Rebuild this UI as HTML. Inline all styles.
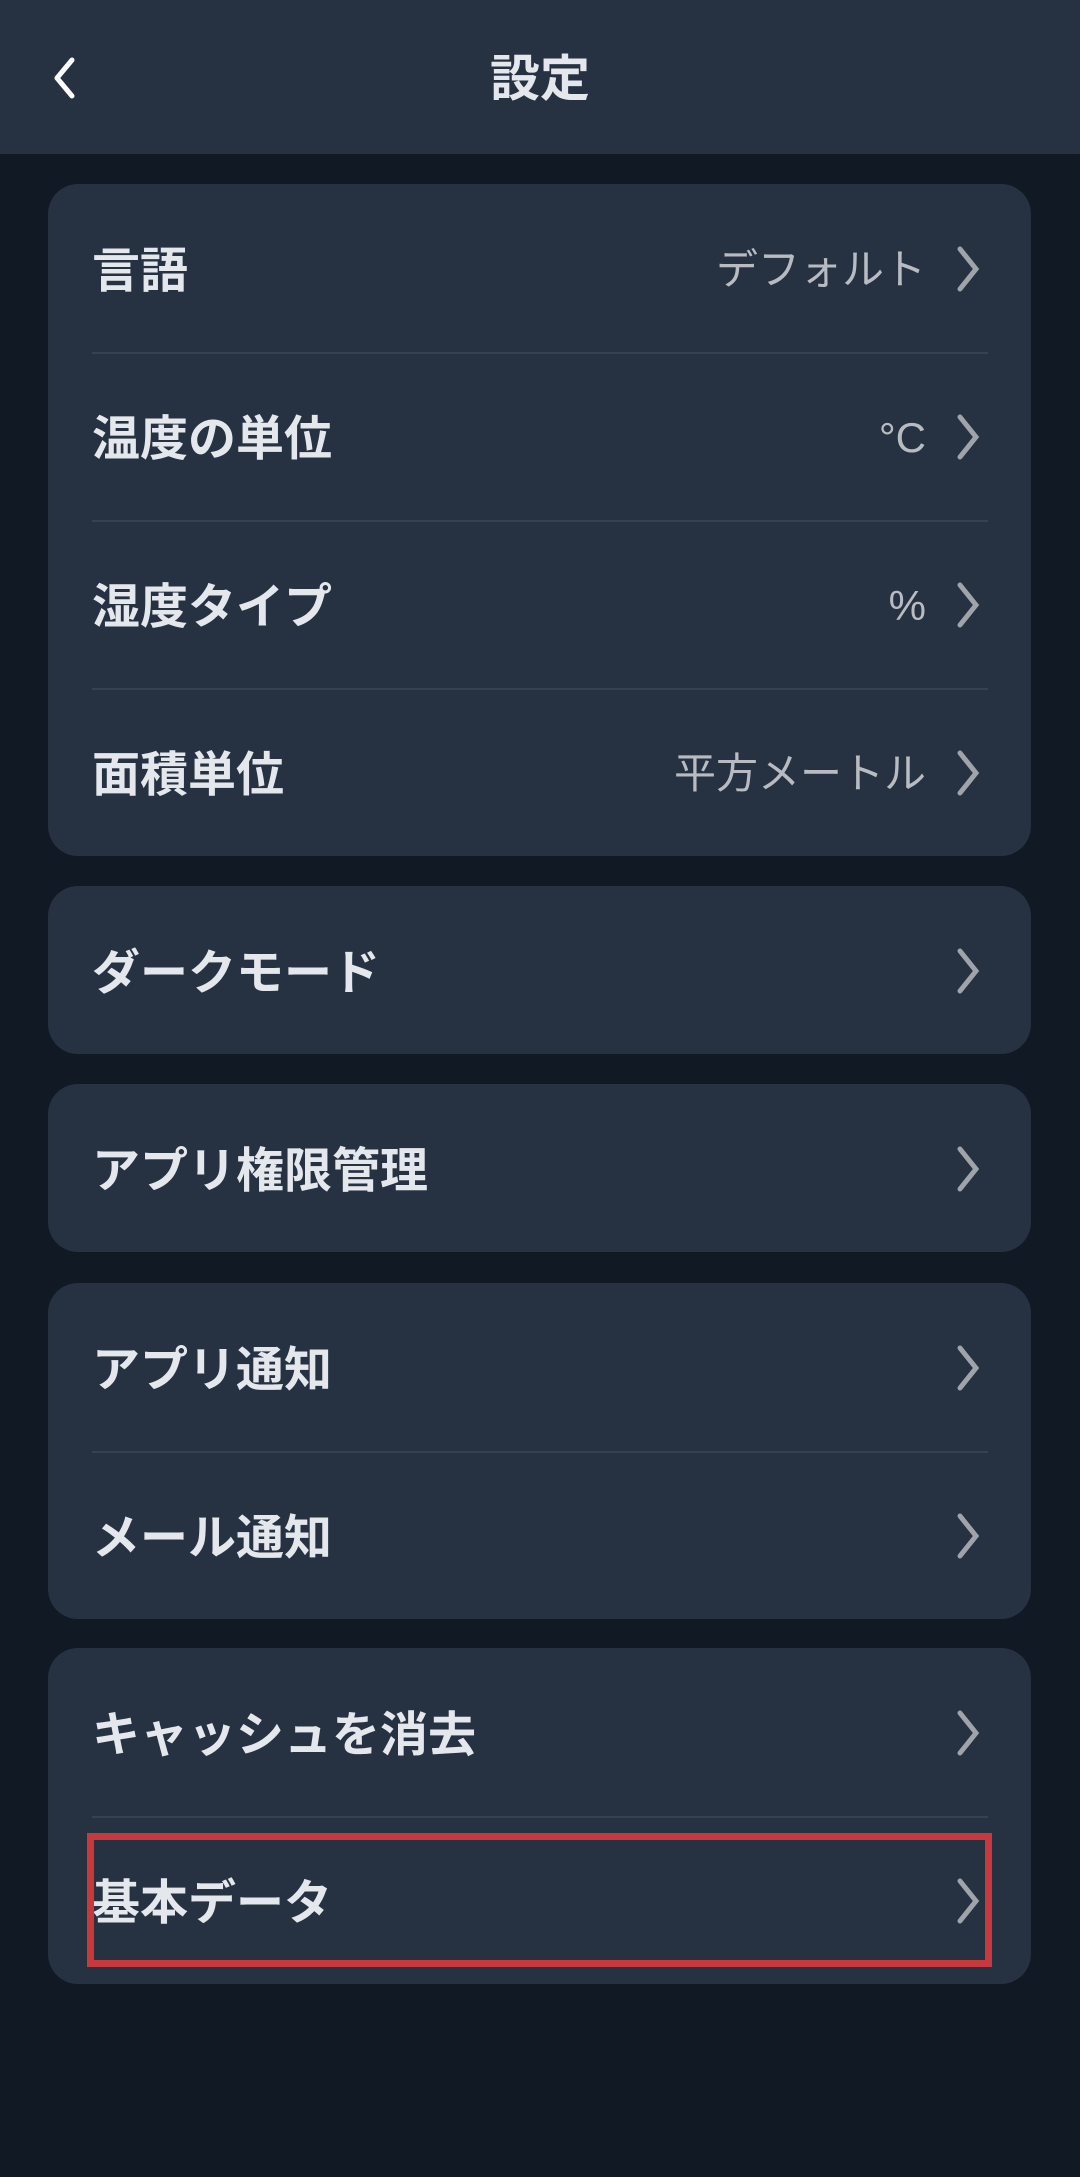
<!DOCTYPE html>
<html><head><meta charset="utf-8"><style>
*{margin:0;padding:0;box-sizing:border-box}
body{width:1080px;height:2177px;background:#111924;font-family:"Liberation Sans","Noto Sans CJK JP",sans-serif;position:relative;overflow:hidden}
.hdr{position:absolute;left:0;top:0;width:1080px;height:154px;background:#263142}
.hdr .t{position:absolute;left:0;right:0;top:49px;text-align:center;color:#e4e7eb;font-size:50px;font-weight:bold;line-height:60px}
.card{position:absolute;left:48px;width:983px;background:#263142;border-radius:30px}
.row{position:relative;height:168px}
.row+.row:before{content:"";position:absolute;left:44px;right:43px;top:0;height:2px;background:#364254}
.lb{position:absolute;left:44px;top:58px;font-size:48px;font-weight:bold;color:#e4e7eb;line-height:60px}
.v{position:absolute;right:105px;top:58px;font-size:42px;color:#b8bcc2;line-height:56px}
.ch{position:absolute;left:906px;top:62px}
.red{position:absolute;left:87px;top:1833px;width:905px;height:134px;border:7px solid #c7393d}
</style></head><body>
<div class="hdr">
<svg style="position:absolute;left:50px;top:57px" width="30" height="42" viewBox="0 0 30 42"><path d="M22 3 L7 21 L22 39" fill="none" stroke="#fff" stroke-width="5" stroke-linecap="round" stroke-linejoin="round"/></svg>
<div class="t">設定</div></div>

<div class="card" style="top:184px">
<div class="row"><div class="lb">言語</div><div class="v">デフォルト</div><svg class="ch" width="30" height="46" viewBox="0 0 30 46"><path d="M6 3 L22 23 L6 43" fill="none" stroke="#a0a4aa" stroke-width="5" stroke-linecap="round"/></svg></div>
<div class="row"><div class="lb">温度の単位</div><div class="v">°C</div><svg class="ch" width="30" height="46" viewBox="0 0 30 46"><path d="M6 3 L22 23 L6 43" fill="none" stroke="#a0a4aa" stroke-width="5" stroke-linecap="round"/></svg></div>
<div class="row"><div class="lb">湿度タイプ</div><div class="v">%</div><svg class="ch" width="30" height="46" viewBox="0 0 30 46"><path d="M6 3 L22 23 L6 43" fill="none" stroke="#a0a4aa" stroke-width="5" stroke-linecap="round"/></svg></div>
<div class="row"><div class="lb">面積単位</div><div class="v">平方メートル</div><svg class="ch" width="30" height="46" viewBox="0 0 30 46"><path d="M6 3 L22 23 L6 43" fill="none" stroke="#a0a4aa" stroke-width="5" stroke-linecap="round"/></svg></div>
</div>

<div class="card" style="top:886px">
<div class="row"><div class="lb">ダークモード</div><svg class="ch" width="30" height="46" viewBox="0 0 30 46"><path d="M6 3 L22 23 L6 43" fill="none" stroke="#a0a4aa" stroke-width="5" stroke-linecap="round"/></svg></div>
</div>

<div class="card" style="top:1084px">
<div class="row"><div class="lb">アプリ権限管理</div><svg class="ch" width="30" height="46" viewBox="0 0 30 46"><path d="M6 3 L22 23 L6 43" fill="none" stroke="#a0a4aa" stroke-width="5" stroke-linecap="round"/></svg></div>
</div>

<div class="card" style="top:1283px">
<div class="row"><div class="lb">アプリ通知</div><svg class="ch" width="30" height="46" viewBox="0 0 30 46"><path d="M6 3 L22 23 L6 43" fill="none" stroke="#a0a4aa" stroke-width="5" stroke-linecap="round"/></svg></div>
<div class="row"><div class="lb">メール通知</div><svg class="ch" width="30" height="46" viewBox="0 0 30 46"><path d="M6 3 L22 23 L6 43" fill="none" stroke="#a0a4aa" stroke-width="5" stroke-linecap="round"/></svg></div>
</div>

<div class="card" style="top:1648px">
<div class="row"><div class="lb">キャッシュを消去</div><svg class="ch" width="30" height="46" viewBox="0 0 30 46"><path d="M6 3 L22 23 L6 43" fill="none" stroke="#a0a4aa" stroke-width="5" stroke-linecap="round"/></svg></div>
<div class="row"><div class="lb">基本データ</div><svg class="ch" width="30" height="46" viewBox="0 0 30 46"><path d="M6 3 L22 23 L6 43" fill="none" stroke="#a0a4aa" stroke-width="5" stroke-linecap="round"/></svg></div>
</div>
<div class="red"></div>
</body></html>
